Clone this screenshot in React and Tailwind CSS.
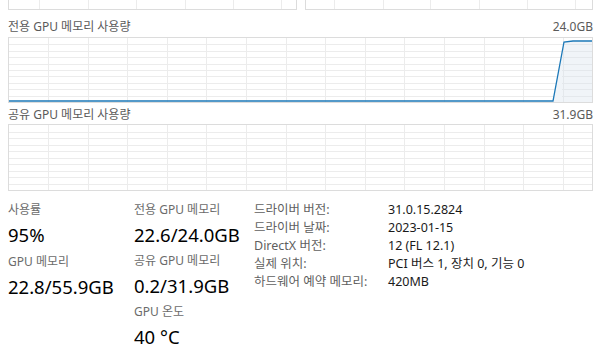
const KR = { fontFamily: '"Noto Sans", "Noto Sans CJK KR", sans-serif' };

function GridSvg({ w, h, cols, rows, children }) {
  const hl = [];
  for (let i = 1; i < rows; i++) hl.push((h * i) / rows);
  return (
    <svg width={w} height={h} className="block">
      {hl.map((y, i) => (
        <line key={'h' + i} x1="0" x2={w} y1={Math.round(y) + 0.5} y2={Math.round(y) + 0.5} stroke="#ececec" />
      ))}
      {cols.map((x, i) => (
        <line key={'v' + i} x1={Math.round(x) + 0.5} x2={Math.round(x) + 0.5} y1="0" y2={h} stroke="#ececec" />
      ))}
      {children}
    </svg>
  );
}

const chartCols = Array.from({ length: 14 }, (_, k) => 39 + k * 39.6);

function Chart({ h, children }) {
  return (
    <div className="border border-[#dcdcdc] w-[585px]">
      <GridSvg w={583} h={h} cols={chartCols} rows={10}>
        {children}
      </GridSvg>
    </div>
  );
}

function Stat({ label, value }) {
  return (
    <div>
      <div className="text-[12px] leading-[20px] text-[#6b6b6b]">{label}</div>
      <div className="text-[18.5px] leading-[30px] text-black">{value}</div>
    </div>
  );
}

const info = [
  ['드라이버 버전:', '31.0.15.2824'],
  ['드라이버 날짜:', '2023-01-15'],
  ['DirectX 버전:', '12 (FL 12.1)'],
  ['실제 위치:', 'PCI 버스 1, 장치 0, 기능 0'],
  ['하드웨어 예약 메모리:', '420MB'],
];

export default function App() {
  return (
    <div className="w-[614px] h-[356px] bg-white overflow-hidden pl-[8px]" style={KR}>
      {/* cut-off charts from above */}
      <div className="flex gap-[8px] w-[585px]">
        <div className="border-x border-b border-[#dcdcdc] w-[289px] h-[10px]">
          <GridSvg w={287} h={9} cols={[30, 79, 127, 176, 224, 272]} rows={1} />
        </div>
        <div className="border-x border-b border-[#dcdcdc] w-[288px] h-[10px]">
          <GridSvg w={286} h={9} cols={[28, 77, 124, 173, 221, 269]} rows={1} />
        </div>
      </div>

      <div className="flex justify-between w-[585px] mt-[9px] text-[12px] leading-[16px] text-[#5a5a5a]">
        <span>전용 GPU 메모리 사용량</span>
        <span>24.0GB</span>
      </div>
      <div className="mt-[2px]">
        <Chart h={64}>
          <polygon points="544,64 555,4.5 564,3.5 583,3.5 583,64" fill="#f0f4f8" />
          {chartCols.filter((x) => x > 544).map((x) => (
            <line key={x} x1={Math.round(x) + 0.5} x2={Math.round(x) + 0.5} y1="4" y2="64" stroke="#e4e8ec" />
          ))}
          {[6.4, 12.8, 19.2, 25.6, 32, 38.4, 44.8, 51.2, 57.6].map((y) => (
            <line key={y} x1="553" x2="583" y1={Math.round(y) + 0.5} y2={Math.round(y) + 0.5} stroke="#e4e8ec" />
          ))}
          <polyline points="0,63 544,63 555,4 564,3 583,3" fill="none" stroke="#1b78b8" strokeWidth="1.3" />
        </Chart>
      </div>

      <div className="flex justify-between w-[585px] mt-[4px] text-[12px] leading-[16px] text-[#5a5a5a]">
        <span>공유 GPU 메모리 사용량</span>
        <span>31.9GB</span>
      </div>
      <div className="mt-[1px]">
        <Chart h={65} />
      </div>

      <div className="flex mt-[9px]">
        <div className="w-[126px] flex flex-col gap-[2px]">
          <Stat label="사용률" value="95%" />
          <Stat label="GPU 메모리" value="22.8/55.9GB" />
        </div>
        <div className="w-[120px] flex flex-col gap-[1px]">
          <Stat label="전용 GPU 메모리" value="22.6/24.0GB" />
          <Stat label="공유 GPU 메모리" value="0.2/31.9GB" />
          <Stat label="GPU 온도" value="40 °C" />
        </div>
        <div className="pt-[1px] text-[12.5px] leading-[18px]">
          {info.map(([k, v]) => (
            <div key={k} className="flex">
              <span className="w-[134px] text-[#5f5f5f]">{k}</span>
              <span className="text-[#1a1a1a]">{v}</span>
            </div>
          ))}
        </div>
      </div>
    </div>
  );
}
